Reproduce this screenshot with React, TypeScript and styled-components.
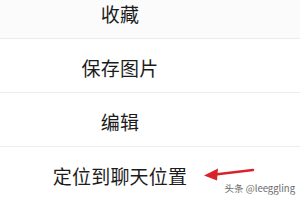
import React, { FC } from 'react';
import styled, { createGlobalStyle } from 'styled-components';

const GlobalStyle = createGlobalStyle`
  html, body {
    margin: 0;
    padding: 0;
    background: #ffffff;
  }
  body {
    font-family: "Noto Sans CJK SC", "Noto Sans", sans-serif;
  }
`;

const Screen = styled.div`
  position: relative;
  width: 300px;
  height: 200px;
  overflow: hidden;
  background: #ffffff;
`;

const Menu = styled.ul`
  list-style: none;
  margin: -15px 0 0;
  padding: 0;
`;

const Item = styled.li<{ $tinted?: boolean }>`
  display: flex;
  align-items: center;
  justify-content: center;
  height: 54px;
  padding-right: 60px;
  padding-top: 4px;
  box-sizing: border-box;
  border-bottom: 1px solid #ececec;
  background: ${(p) => (p.$tinted ? '#fbfbfb' : '#ffffff')};
  font-size: 19px;
  color: #1c1c1c;
  letter-spacing: 0.2px;
`;

const Arrow = styled.svg`
  position: absolute;
  left: 203px;
  top: 165px;
`;

const Watermark = styled.span`
  position: absolute;
  right: 5px;
  bottom: 5px;
  font-size: 9.5px;
  color: #6a6a6a;
  text-shadow: 0 0 2px rgba(255, 255, 255, 0.9);
`;

const items = ['收藏', '保存图片', '编辑', '定位到聊天位置'];

const App: FC = () => (
  <>
    <GlobalStyle />
    <Screen>
      <Menu>
        {items.map((label, i) => (
          <Item key={label} $tinted={i === 0}>
            {label}
          </Item>
        ))}
      </Menu>
      <Arrow width="52" height="18" viewBox="0 0 52 18">
        <line x1="12" y1="9.5" x2="50" y2="5" stroke="#d8232a" strokeWidth="2.4" strokeLinecap="round" />
        <polygon points="1,10.5 15,3.5 14,15.5" fill="#d8232a" />
      </Arrow>
      <Watermark>头条 @leeggling</Watermark>
    </Screen>
  </>
);

export default App;
